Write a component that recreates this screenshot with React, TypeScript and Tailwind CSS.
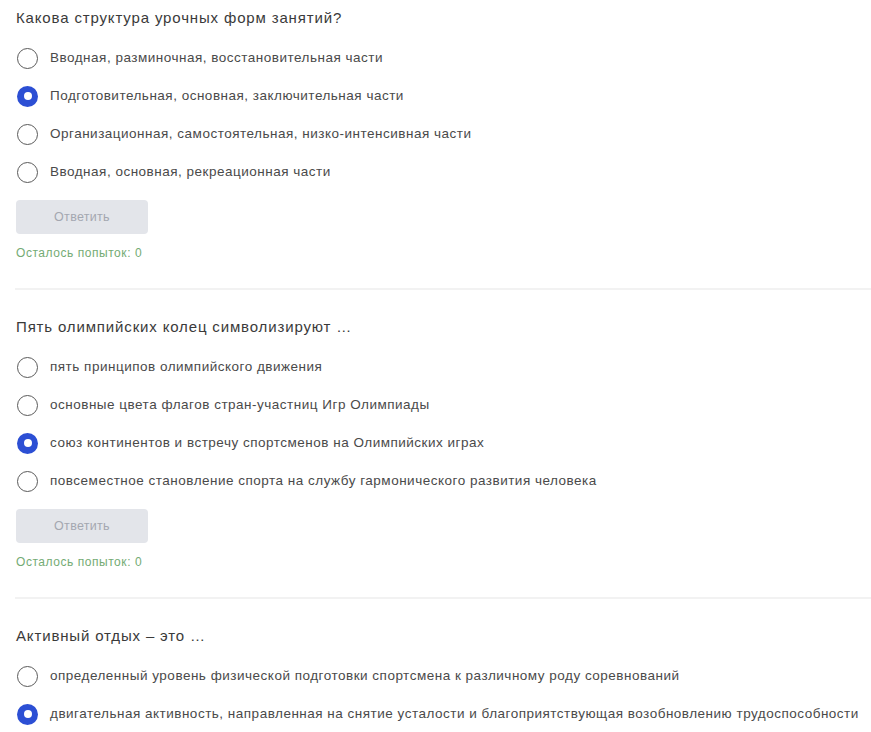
import { useState } from 'react';

type Question = {
  id: string;
  title: string;
  options: string[];
  selected: number;
  last?: boolean;
};

const QUESTIONS: Question[] = [
  {
    id: 'q1',
    title: 'Какова структура урочных форм занятий?',
    options: [
      'Вводная, разминочная, восстановительная части',
      'Подготовительная, основная, заключительная части',
      'Организационная, самостоятельная, низко-интенсивная части',
      'Вводная, основная, рекреационная части',
    ],
    selected: 1,
  },
  {
    id: 'q2',
    title: 'Пять олимпийских колец символизируют …',
    options: [
      'пять принципов олимпийского движения',
      'основные цвета флагов стран-участниц Игр Олимпиады',
      'союз континентов и встречу спортсменов на Олимпийских играх',
      'повсеместное становление спорта на службу гармонического развития человека',
    ],
    selected: 2,
  },
  {
    id: 'q3',
    title: 'Активный отдых – это …',
    options: [
      'определенный уровень физической подготовки спортсмена к различному роду соревнований',
      'двигательная активность, направленная на снятие усталости и благоприятствующая возобновлению трудоспособности',
    ],
    selected: 1,
    last: true,
  },
];

function Radio({ checked }: { checked: boolean }) {
  if (checked) {
    return (
      <span className="flex h-[21px] w-[21px] shrink-0 items-center justify-center rounded-full bg-[#2c4fd4]">
        <span className="h-[8px] w-[8px] rounded-full bg-white" />
      </span>
    );
  }
  return <span className="h-[21px] w-[21px] shrink-0 rounded-full border-[1.5px] border-[#5a5a5a] bg-white" />;
}

function QuestionBlock({ q }: { q: Question }) {
  const [selected, setSelected] = useState(q.selected);
  return (
    <section className="pt-[8px]">
      <h2 className="mb-[11px] pl-[15px] text-[15px] leading-[20px] tracking-[0.85px] text-[#3a3a3a]">{q.title}</h2>
      <div className="flex flex-col">
        {q.options.map((opt, i) => (
          <label
            key={i}
            onClick={() => setSelected(i)}
            className="flex h-[38px] cursor-pointer items-center gap-[12px] pl-[16px]"
          >
            <Radio checked={selected === i} />
            <span className="whitespace-nowrap text-[13.5px] tracking-[0.5px] text-[#4a4a4a]">{opt}</span>
          </label>
        ))}
      </div>
      {!q.last && (
        <>
          <button
            disabled
            className="mt-[9px] ml-[15px] flex h-[34px] w-[132px] items-center justify-center rounded-[4px] bg-[#e3e5ea] text-[12.5px] tracking-[0.3px] text-[#a3a7b0]"
          >
            Ответить
          </button>
          <div className="mt-[11px] pl-[15px] text-[12px] leading-[16px] tracking-[0.55px] text-[#74ab74]">Осталось попыток: 0</div>
          <div className="mt-[27px] ml-[14px] h-[2px] bg-[#f2f2f2]" />
          <div className="h-[19px]" />
        </>
      )}
    </section>
  );
}

export default function App() {
  return (
    <div className="min-h-[732px] w-[871px] overflow-hidden bg-white pl-[1px]" style={{ fontFamily: '"Liberation Sans", Arial, sans-serif' }}>
      {QUESTIONS.map(q => (
        <QuestionBlock key={q.id} q={q} />
      ))}
    </div>
  );
}
